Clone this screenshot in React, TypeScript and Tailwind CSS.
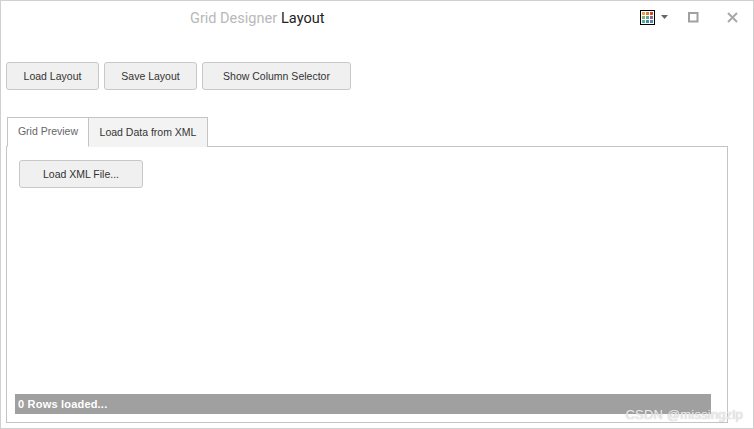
import React from "react";

function Btn({ className, label }: { className: string; label: string }) {
  return (
    <button className={`h-[28px] shrink-0 rounded-[3px] border border-[#c8c8c8] bg-[#f0f0f0] pt-[1px] text-[10.5px] text-[#333] flex items-center justify-center ${className}`}>
      {label}
    </button>
  );
}

const swatches = ["#e8a33c", "#e07b39", "#d2492f", "#8fae6a", "#5aa9a0", "#8a6d8a", "#4fb29a", "#3d8fb8", "#5f7fa8"];

export default function App() {
  return (
    <div className="relative w-[754px] h-[429px] overflow-hidden bg-white border border-[#d0d0d0] font-['Liberation_Sans',sans-serif]">
      <div className="flex h-[36px] items-start">
        <div className="ml-[189px] mt-[8px] text-[14.5px] leading-[20px] font-['Roboto',sans-serif]">
          <span className="text-[#b8b8b8]">Grid Designer</span>
          <span className="ml-[4px] text-[#222]">Layout</span>
        </div>
        <div className="ml-auto mr-[15px] mt-[9px] flex items-center">
          <div className="grid h-[15px] w-[15px] grid-cols-3 gap-[1px] border border-black bg-white p-[1px]">
            {swatches.map((c) => (
              <div key={c} style={{ backgroundColor: c }} />
            ))}
          </div>
          <svg width="8" height="5" viewBox="0 0 8 5" className="ml-[6px]">
            <path d="M0 0h7L3.500 4z" fill="#666" />
          </svg>
          <svg width="11" height="11" viewBox="0 0 11 11" className="ml-[19px]">
            <rect x="1" y="1" width="8.500" height="8.500" fill="none" stroke="#a0a0a0" strokeWidth="2" />
          </svg>
          <svg width="11" height="11" viewBox="0 0 11 11" className="ml-[28px]">
            <path d="M1 1l9 9M10 1l-9 9" stroke="#a8a8a8" strokeWidth="2" />
          </svg>
        </div>
      </div>

      <div className="mt-[25px] ml-[5px] flex gap-[5px]">
        <Btn className="w-[93px]" label="Load Layout" />
        <Btn className="w-[93px]" label="Save Layout" />
        <Btn className="w-[149px]" label="Show Column Selector" />
      </div>

      <div className="mt-[27px] ml-[6px] flex h-[30px] text-[10.5px]">
        <div className="z-10 flex w-[82px] items-center justify-center border border-[#c4c4c4] border-b-white bg-white text-[#666]">
          Grid Preview
        </div>
        <div className="-ml-px flex w-[120px] items-center justify-center border border-b-0 border-[#c4c4c4] bg-[#f3f3f3] text-[#333]">
          Load Data from XML
        </div>
      </div>

      <div className="-mt-px ml-[5px] flex h-[277px] w-[722px] flex-col border border-[#c4c4c4] bg-white">
        <Btn className="ml-[12px] mt-[13px] w-[124px]" label="Load XML File..." />
        <div className="ml-[8px] mt-[206px] flex h-[20px] w-[696px] items-center bg-[#a0a0a0] pl-[3px] text-[11px] font-bold tracking-[0.2px] text-white">
          0 Rows loaded...
        </div>
      </div>

      <div className="absolute right-[10px] top-[404px] text-[13px] tracking-[0.2px] text-white/80 [text-shadow:0_0_1px_#999]">
        CSDN @missingzlp
      </div>
    </div>
  );
}
